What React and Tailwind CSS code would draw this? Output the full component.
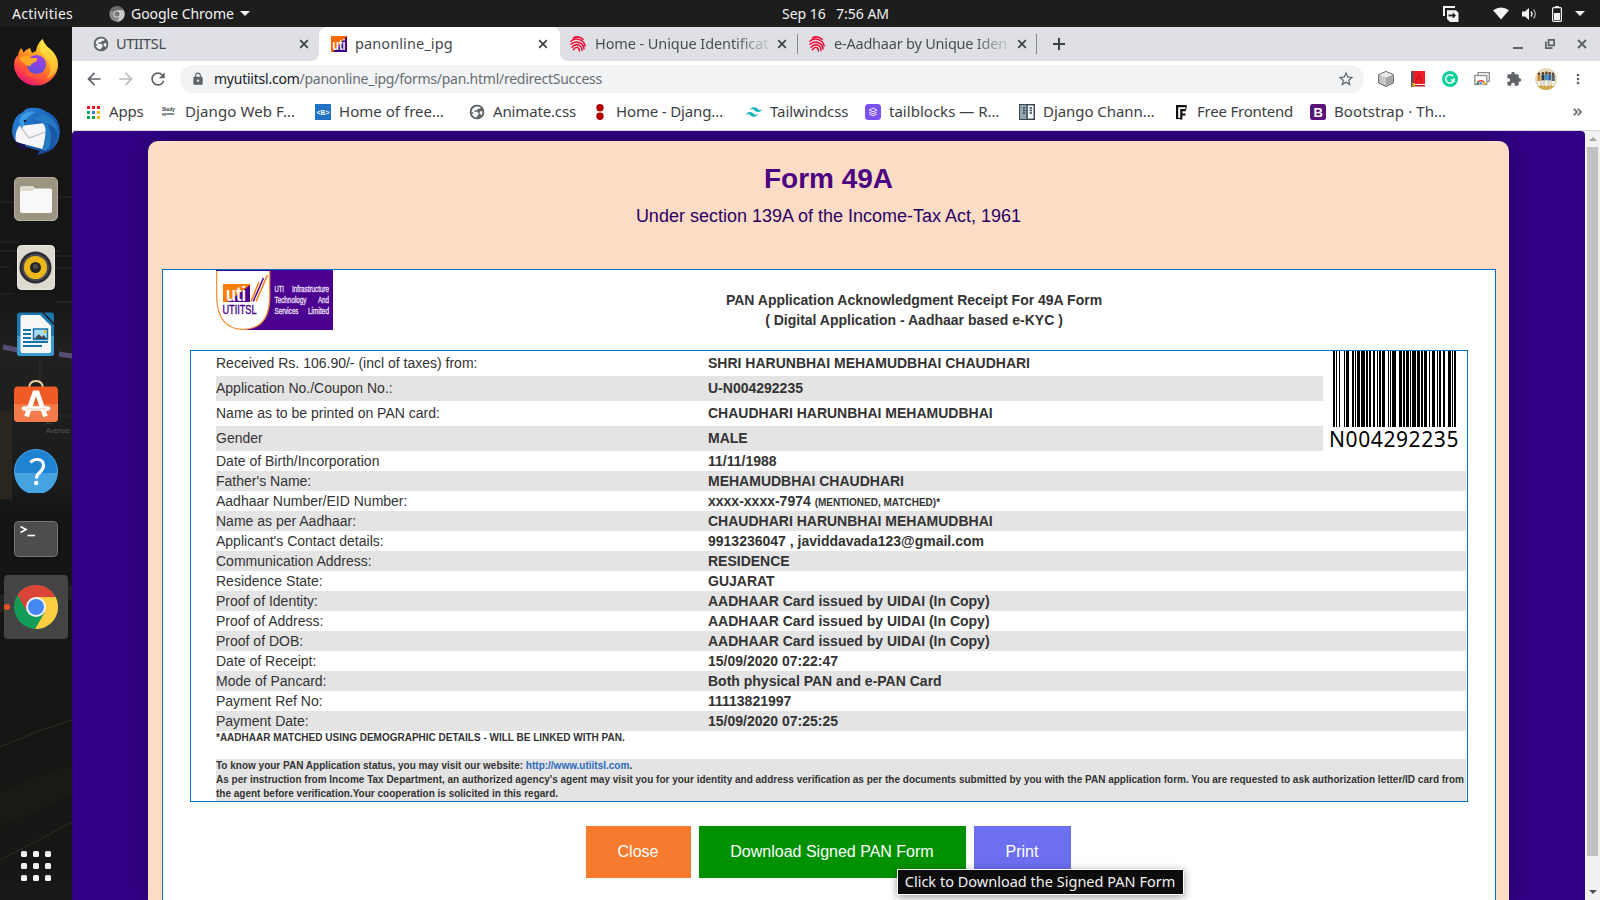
import React from "react";
import { MdLock, MdArrowBack, MdArrowForward, MdRefresh, MdStarBorder, MdExtension, MdMoreVert } from "react-icons/md";

/* ---------- small icons ---------- */

const Cross = ({ className = "" }) => (
  <svg viewBox="0 0 10 10" className={"h-[10px] w-[10px] shrink-0 " + className}>
    <path d="M1.200 1.200l7.600 7.600M8.800 1.200l-7.600 7.600" stroke="#3c4043" strokeWidth="1.700" fill="none" />
  </svg>
);

const Globe = () => (
  <svg viewBox="0 0 16 16" className="h-4 w-4 shrink-0">
    <circle cx="8" cy="8" r="7.200" fill="#5f6368" />
    <path d="M7.200 2.200q3-.9 5 1.100l-1.200 1.500H9.200L8 6.200H6l-1 1.600h3.200l1.400 1.400v1.600l-1.600 1.400-.6 1.800Q2.800 13 2.200 8.600l2 1.600v-1.600L2.200 7.200Q2.800 3.800 7.200 2.200zM11 7.200h2.800q.2 2.600-1.600 4.500l-.6-1.500-1.200-1.200z" fill="#f4f5f6" />
    <circle cx="8" cy="8" r="6.500" fill="none" stroke="#5f6368" strokeWidth="1.500" />
  </svg>
);

const GrayChrome = () => (
  <svg viewBox="0 0 48 48" className="h-[16px] w-[16px] shrink-0">
    <circle cx="24" cy="24" r="23" fill="#8a8a8a" />
    <path d="M24 24L4 12A23 23 0 0 1 44 13H24z" fill="#6b6b6b" />
    <path d="M24 13h20A23 23 0 0 1 24 47l10-17z" fill="#c9c9c9" />
    <circle cx="24" cy="24" r="10.5" fill="#eee" />
    <circle cx="24" cy="24" r="8" fill="#777" />
  </svg>
);

const UtiFavicon = () => (
  <svg viewBox="0 0 16 16" className="h-4 w-4 shrink-0">
    <rect width="16" height="16" fill="#ff6a00" />
    <path d="M16 0v16H2z" fill="#330086" />
    <text x="8" y="14" fontSize="14" fontWeight="700" fill="#fff" textAnchor="middle" textLength="13" lengthAdjust="spacingAndGlyphs" fontFamily="Liberation Sans, sans-serif">uti</text>
  </svg>
);

const Aadhaar = () => (
  <svg viewBox="0 0 16 16" className="h-4 w-4 shrink-0" fill="none" stroke="#ee0a35" strokeWidth="1.5" strokeLinecap="round">
    <path d="M3.400 2Q8.500-.8 13 3.400" />
    <path d="M.9 5.200Q4.500 1.800 9.500 3.600T15.200 10" />
    <path d="M1 8.300Q5 4.600 9.600 6.800T14 13" />
    <path d="M2 11.200Q5.500 7.400 8.900 9.200T11.900 14.400" />
    <path d="M3.400 13.700Q6 10.400 7.900 11.700T9.400 15" />
  </svg>
);

const AppsIcon = () => (
  <svg viewBox="0 0 13 13" className="ml-[1px] h-[13px] w-[13px] shrink-0">
    <path d="M0 0h3v3H0zM5 0h3v3H5zM10 0h3v3h-3z" fill="#f2132d" />
    <path d="M0 5h3v3H0zM0 10h3v3H0z" fill="#0aa552" />
    <path d="M5 5h3v3H5z" fill="#3b78f5" />
    <path d="M5 10h3v3H5z" fill="#0aa552" />
    <path d="M10 5h3v3h-3zM10 10h3v3h-3z" fill="#fbb50a" />
  </svg>
);

const StudyIcon = () => (
  <svg viewBox="0 0 16 16" className="h-4 w-4 shrink-0 overflow-visible">
    <text x="1" y="7.300" fontSize="4.600" fontWeight="700" fill="#22352d" fontFamily="Liberation Sans, sans-serif">Study</text>
    <text x="1" y="11.300" fontSize="4.300" fontWeight="700" fill="#22352d" fontFamily="Liberation Sans, sans-serif">gyaan</text>
  </svg>
);

const BracketB = () => (
  <svg viewBox="0 0 16 16" className="h-4 w-4 shrink-0">
    <rect width="16" height="16" fill="#2272c3" />
    <text x="8" y="10.6" fontSize="7" fontWeight="700" fill="#fff" textAnchor="middle" textLength="12.5" lengthAdjust="spacingAndGlyphs" fontFamily="Liberation Sans, sans-serif">&lt;B&gt;</text>
  </svg>
);

const RedDots = () => (
  <svg viewBox="0 0 16 16" className="h-4 w-4 shrink-0" fill="#b50000">
    <circle cx="8" cy="3.8" r="3.7" />
    <circle cx="8" cy="12.2" r="3.7" />
  </svg>
);

const TailwindIcon = () => (
  <svg viewBox="0 0 24 24" className="h-4 w-4 shrink-0" fill="#12b5b8">
    <path d="M12 4.8c-3.2 0-5.2 1.6-6 4.8 1.2-1.6 2.6-2.2 4.2-1.8.9.2 1.6.9 2.3 1.7C13.700 10.600 15 12 18 12c3.200 0 5.200-1.600 6-4.800-1.200 1.600-2.600 2.200-4.200 1.800-.9-.2-1.600-.9-2.300-1.700C16.300 6.200 15 4.800 12 4.800zM6 12c-3.200 0-5.200 1.600-6 4.800 1.200-1.600 2.600-2.200 4.200-1.800.9.200 1.600.9 2.300 1.700 1.200 1.100 2.500 2.500 5.500 2.500 3.200 0 5.200-1.600 6-4.800-1.200 1.600-2.600 2.200-4.200 1.800-.9-.2-1.600-.9-2.300-1.700C10.300 13.400 9 12 6 12z" />
  </svg>
);

const TailblocksIcon = () => (
  <svg viewBox="0 0 16 16" className="h-4 w-4 shrink-0">
    <rect width="16" height="16" rx="3.5" fill="#7c4ff0" />
    <g fill="none" stroke="#fff" strokeWidth="0.9" strokeLinejoin="round">
      <path d="M8 4l3.800 1.900L8 7.800 4.200 5.900z" />
      <path d="M4.200 8L8 9.900 11.800 8M4.200 10L8 11.900 11.800 10" />
    </g>
  </svg>
);

const DocsIcon = () => (
  <svg viewBox="0 0 16 16" className="h-4 w-4 shrink-0">
    <rect x=".7" y=".7" width="14.600" height="14.600" fill="#f4f6f8" stroke="#37474f" strokeWidth="1.400" />
    <rect x="1.400" y="1.400" width="6.300" height="13.200" fill="#90a4b4" />
    <path d="M8 1v14" stroke="#37474f" strokeWidth="1.600" />
    <path d="M4 4h2M4 6.500h2M4 9h2M10.500 4h2.500M10.500 6.500h2.500M10.500 9h2.500" stroke="#37474f" strokeWidth="1.500" />
  </svg>
);

const FreeFrontendIcon = () => (
  <svg viewBox="0 0 16 16" className="h-4 w-4 shrink-0" fill="none" stroke="#111" strokeWidth="2.200">
    <path d="M13.500 2.200H4.100v12.700" />
    <path d="M12.800 6.200H8.300v9.300M8 10.500h4.500" />
    <path d="M13 1.500v4" strokeWidth="1" />
    <path d="M3 14.500h6" strokeWidth="1.200" />
  </svg>
);

const BootstrapIcon = () => (
  <svg viewBox="0 0 16 16" className="h-4 w-4 shrink-0">
    <rect width="16" height="16" rx="2.500" fill="#59147a" />
    <text x="8.100" y="12.700" fontSize="13" fontWeight="700" fill="#fff" textAnchor="middle" fontFamily="Liberation Sans, sans-serif">B</text>
  </svg>
);

/* ---------- top bar ---------- */

const Caret = ({ className = "" }) => (
  <svg viewBox="0 0 10 5" className={"h-[5px] w-[10px] shrink-0 " + className}><path d="M0 0h10L5 5z" fill="#f2f2f2" /></svg>
);

function TopBar() {
  return (
    <header className="grid h-[27px] shrink-0 grid-cols-[782px_1fr_157px] items-center bg-[#1d1d1d] text-[14px] leading-[27px] text-[#f2f2f2]">
      <div className="flex items-center pl-3">
        <span className="w-[97px] tracking-[0.27px]">Activities</span>
        <GrayChrome />
        <span className="ml-[6px] w-[109px] tracking-[-0.03px]">Google Chrome</span>
        <Caret />
      </div>
      <div className="flex">
        <span className="w-[54px]">Sep 16</span>
        <span>7:56 AM</span>
      </div>
      <div className="flex items-center">
        <svg viewBox="0 0 16 16" className="h-4 w-4 shrink-0">
          <path d="M1 10V1h11" fill="none" stroke="#f2f2f2" strokeWidth="2" />
          <path d="M4 4.200h9l2.500 2.500V16H7l-3-3z" fill="#f2f2f2" />
          <path d="M5.500 9.500h5" stroke="#1d1d1d" strokeWidth="1.800" />
          <path d="M9.700 6.500l3.300 3-3.300 3z" fill="#1d1d1d" />
        </svg>
        <svg viewBox="0 0 16 13" className="ml-[34px] h-[13px] w-[16px] shrink-0"><path d="M0 3.200Q8-2 16 3.200L8 12.500z" fill="#f2f2f2" /></svg>
        <svg viewBox="0 0 16 14" className="ml-[13px] h-[14px] w-[16px] shrink-0">
          <path d="M0 4.500h3L7 1v12L3 9.500H0z" fill="#f2f2f2" />
          <path d="M9 4.500q2 2.500 0 5" fill="none" stroke="#f2f2f2" strokeWidth="1.300" />
          <path d="M11.500 2.500q3.500 4.500 0 9" fill="none" stroke="#b5b5b5" strokeWidth="1.200" />
        </svg>
        <svg viewBox="0 0 10 16" className="ml-[14px] h-4 w-[10px] shrink-0">
          <path d="M3 0h4v2H3z" fill="#f2f2f2" />
          <rect x=".6" y="1.600" width="8.800" height="13.800" rx="1" fill="none" stroke="#f2f2f2" strokeWidth="1.200" />
          <rect x="2" y="7" width="6" height="7" fill="#f2f2f2" />
        </svg>
        <Caret className="ml-[13px]" />
      </div>
    </header>
  );
}

/* ---------- dock ---------- */

const FirefoxIcon = () => (
  <svg viewBox="0 0 46 48" className="-mt-[2px] h-[48px] w-[46px]">
    <defs>
      <linearGradient id="ff1" x1=".8" y1=".1" x2=".3" y2="1">
        <stop offset="0" stopColor="#ffe23a" /><stop offset=".4" stopColor="#ff9a1f" /><stop offset=".75" stopColor="#ff4a3d" /><stop offset="1" stopColor="#e5127a" />
      </linearGradient>
      <linearGradient id="ff3" x1="0" y1="0" x2="0" y2="1"><stop offset="0" stopColor="#fff04a" /><stop offset="1" stopColor="#ffb42a" /></linearGradient>
      <radialGradient id="ff2" cx=".6" cy=".25" r=".8"><stop offset="0" stopColor="#a33ce8" /><stop offset="1" stopColor="#5a4fd8" /></radialGradient>
    </defs>
    <path d="M8 10q2 2 2.500 4.500Q13 11 17 10l2 5 4-2Q24 6 29.500 1q2 6 7 9.500 8.500 7 8.500 16a22 21 0 0 1-44 0q0-5 3-9 .5 1 .5 2Q5 14 8 10z" fill="url(#ff1)" />
    <path d="M29.500 1q2 6 7 9.500 9 7.500 8.300 18Q42 38 34 40q6-8 1-17-6-6-8-10-1-6 2.500-12z" fill="url(#ff3)" opacity=".85" />
    <circle cx="23.500" cy="26.500" r="9.500" fill="url(#ff2)" />
    <path d="M6 20q7-4 12 0h6q1 3-3 4.500-3 1-4 4-6-1-11-8.500z" fill="#ffa824" />
    <path d="M14 29q3 9 12 8-8 4-13-1z" fill="#ff5a35" />
  </svg>
);

const ThunderbirdIcon = () => (
  <svg viewBox="0 0 48 48" className="h-12 w-12">
    <defs><linearGradient id="tb" x1="0" y1="0" x2="1" y2="1"><stop offset="0" stopColor="#2c86dd" /><stop offset=".5" stopColor="#1b63b8" /><stop offset="1" stopColor="#1a3f94" /></linearGradient></defs>
    <path d="M18 1q10-1 15 3 14 5 15 20-1 17-13 21l-10 3 3-4-19-6Q0 34 0 24 1 9 11 5q3-4 7-4z" fill="url(#tb)" />
    <path d="M7 19l26-3q4 13 1 27L4 35q-2-8 3-16z" fill="#f6f6f8" />
    <path d="M8 19l9 12 17-6" fill="none" stroke="#b6bac4" strokeWidth="1.200" />
    <path d="M10 8q6-5 14-3-10 4-12 12l-2 5-2-4q-1-6 2-10z" fill="#3d9be6" />
    <path d="M24 13q12 2 9 17-1 8-3 13 17-1 17-17Q44 11 32 7q-6 0-8 6z" fill="#2479c2" />
    <path d="M34 16q8 10 3 26 8-4 9-14-2-9-12-12z" fill="#1c58a8" />
    <path d="M2 33q4 3 11 4.500 0 3 1 5.500Q6 42 2 33z" fill="#1b1350" />
    <circle cx="13" cy="14" r="1.300" fill="#10203c" />
  </svg>
);

const FilesIcon = () => (
  <svg viewBox="0 0 44 44" className="h-11 w-11">
    <rect x=".5" y=".5" width="43" height="43" rx="4.500" fill="#9c9482" stroke="#b8b19f" />
    <path d="M6 30V11q0-2 2-2h11l3 3.500h14q2 0 2 2V34" fill="#e0dbd0" />
    <path d="M6 16q0-2 2-2h10l3-2.500h15q2 0 2 2V34q0 2-2 2H8q-2 0-2-2z" fill="#faf9f7" />
  </svg>
);

const SpeakerIcon = () => (
  <svg viewBox="0 0 38 45" className="h-[45px] w-[38px]">
    <rect x=".5" y=".5" width="37" height="44" rx="4" fill="#dedad0" stroke="#ece9e1" />
    <circle cx="18.500" cy="22.500" r="16" fill="#2c2c34" />
    <circle cx="18.500" cy="22.500" r="13.500" fill="#4c4c52" />
    <circle cx="18.500" cy="22.500" r="11.500" fill="#edb91a" />
    <circle cx="18.500" cy="22.500" r="5.500" fill="#262629" />
    <circle cx="18.500" cy="21.500" r="2.500" fill="#4b4b4b" />
  </svg>
);

const WriterIcon = () => (
  <svg viewBox="0 0 38 45" className="-mt-[1px] h-[45px] w-[38px]">
    <path d="M3 .5h22L37 13v28q0 3-3 3H3q-3 0-3-3V3.500Q0 .5 3 .5z" fill="#1a76ac" />
    <path d="M27 .5h7q3 0 3 3V11z" fill="#1a76ac" />
    <path d="M0 24h37v17q0 3-3 3H3q-3 0-3-3z" fill="#3d9ccc" />
    <path d="M5.500 3H23l11 11v25q0 2-2 2H5.500q-2 0-2-2V5q0-2 2-2z" fill="#f7f7f7" />
    <path d="M6 18h8M6 22h8M6 26h8M6 30h25M6 34h19" stroke="#1572aa" strokeWidth="2" />
    <rect x="16.500" y="17" width="14" height="10.500" fill="#a8dcf7" stroke="#1572aa" strokeWidth="1.500" />
    <path d="M17.200 27l4.500-5 3 3 2-2 3.300 4z" fill="#3d4a52" />
    <circle cx="28" cy="19.500" r="1.600" fill="#f0b429" />
  </svg>
);

const SoftwareIcon = () => (
  <svg viewBox="0 0 44 44" className="-mt-[4px] h-11 w-11">
    <path d="M15 10q0-8 7-8t7 8" fill="none" stroke="#e9cf9c" strokeWidth="2" />
    <path d="M4 7.500h36q4 0 4 4V39q0 4-4 4H4q-4 0-4-4V11.500q0-4 4-4z" fill="#f05a24" />
    <path d="M0 25h44v14q0 4-4 4H4q-4 0-4-4z" fill="#f37a49" />
    <path d="M12.500 37.500L20.700 14h2.600l8.200 23.500" fill="none" stroke="#fff" strokeWidth="4.800" />
    <path d="M10 29.500h24" stroke="#fff" strokeWidth="4.500" strokeLinecap="round" />
    <path d="M12 30h20" stroke="#f2b79c" strokeWidth=".8" />
  </svg>
);

const HelpIcon = () => (
  <svg viewBox="0 0 44 44" className="h-11 w-11">
    <circle cx="22" cy="22" r="21.500" fill="#1f83d3" stroke="#4da6e6" />
    <path d="M.5 24h43A21.500 21.500 0 0 1 .5 24z" fill="#45a3e2" />
    <path d="M16.500 13.500q2.500-3 6.500-3 6.500 0 6.500 6 0 3.500-3.500 6.500-3.500 2.800-3.500 6.500" fill="none" stroke="#fff" strokeWidth="3.200" />
    <circle cx="22.200" cy="34" r="2.200" fill="#fff" />
  </svg>
);

const TerminalIcon = () => (
  <svg viewBox="0 0 44 36" className="h-[36px] w-11">
    <rect x=".5" y=".5" width="43" height="35" rx="4" fill="#4d4d4d" stroke="#767676" />
    <path d="M6.500 5.500l5.500 3-5.500 3" fill="none" stroke="#fff" strokeWidth="1.600" />
    <path d="M13.500 14.500h7.500" stroke="#fff" strokeWidth="1.600" />
  </svg>
);

const ChromeIcon = () => (
  <svg viewBox="0 0 44 44" className="h-11 w-11">
    <circle cx="22" cy="22" r="22" fill="#139c57" />
    <path d="M22 22L3.500 10A22 22 0 0 1 41.600 12H22z" fill="#dc4437" />
    <path d="M22 12h19.600A22 22 0 0 1 21 44l9.700-17z" fill="#ffcd40" />
    <path d="M3.500 10L13.300 27 22 22z" fill="#dc4437" />
    <path d="M21 44L30.700 27 13.300 27z" fill="#139c57" />
    <circle cx="22" cy="22" r="10" fill="#f3f3f3" />
    <circle cx="22" cy="22" r="8" fill="#4587f4" />
  </svg>
);

const DockBackdrop = () => (
  <svg viewBox="0 0 72 873" className="absolute inset-0 h-[873px] w-[72px]" fill="none">
    <defs>
      <linearGradient id="dk" x1="0" y1="0" x2="0" y2="1">
        <stop offset="0" stopColor="#161616" /><stop offset=".3" stopColor="#151515" /><stop offset=".37" stopColor="#202020" /><stop offset=".52" stopColor="#1b1c1d" /><stop offset=".56" stopColor="#141414" /><stop offset="1" stopColor="#171715" />
      </linearGradient>
    </defs>
    <rect width="72" height="873" fill="url(#dk)" />
    <path d="M0 175h14M0 215h18M0 224h60M20 229h52M0 240h10M50 170h22M55 241h17M0 267h14M55 275h17" stroke="#3a342a" opacity=".75" />
    <path d="M3 320l15 3M59 327l13 2" stroke="#6f5f96" strokeWidth="5" opacity=".7" />
    <path d="M40 332v60M40 389h30" stroke="#2e2e2f" />
    <rect y="384" width="10" height="88" fill="#2b261d" />
    <path d="M11 384v90" stroke="#3a3327" />
    <text x="46" y="397" fontSize="10" fill="#45484a" fontFamily="Liberation Sans, sans-serif">2</text>
    <text x="46" y="406" fontSize="7" fill="#55585a" fontFamily="Liberation Sans, sans-serif">Avenue</text>
    <path d="M0 568l72-10v14L0 586z" fill="#23211d" />
    <path d="M0 720q30-14 72-27M0 798q36-16 72-32M0 833q36-18 72-38" stroke="#2a2925" strokeWidth="1.200" />
    <path d="M0 765q36-16 72-27v30L0 800z" fill="#191916" />
  </svg>
);

function Dock() {
  const apps = [FirefoxIcon, ThunderbirdIcon, FilesIcon, SpeakerIcon, WriterIcon, SoftwareIcon, HelpIcon, TerminalIcon];
  return (
    <nav className="relative flex w-[72px] shrink-0 flex-col bg-[#151614]">
      <DockBackdrop />
      <div className="relative flex flex-col pt-[2px]">
        {apps.map((Icon, i) => (
          <div key={i} className="flex h-[68px] items-center justify-center">
            <Icon />
          </div>
        ))}
        <div className="flex h-[68px] items-center justify-center">
          <div className="flex h-16 w-16 items-center rounded bg-[#444444]">
            <span className="h-[6px] w-[6px] rounded-full bg-[#e95420]" />
            <span className="ml-[4px]"><ChromeIcon /></span>
          </div>
        </div>
      </div>
      <div className="relative mt-auto grid grid-cols-[6px_6px_6px] gap-[6px] pb-[19px] pl-[21px]">
        {Array.from({ length: 9 }, (_, i) => <span key={i} className="h-[6px] w-[6px] rounded-[1.5px] bg-[#f2f2f2]" />)}
      </div>
    </nav>
  );
}

/* ---------- browser chrome ---------- */

function TabStrip() {
  return (
    <div className="flex h-[34px] shrink-0 bg-white text-[14.5px] leading-[32px] text-[#45494d]">
      <div className="flex w-[247px] items-center rounded-br-[8px] bg-[#dee0e5] pr-[10px] pl-[21px]">
        <Globe />
        <span className="ml-[7px] pb-[2px] tracking-[-0.35px]">UTIITSL</span>
        <Cross className="ml-auto" />
      </div>
      <div className="flex w-[241px] bg-[#dee0e5]">
        <div className="flex grow items-center rounded-t-[8px] bg-white pr-[12px] pl-[12px]">
          <UtiFavicon />
          <span className="ml-[8px] pb-[2px] tracking-[0.1px]">panonline_ipg</span>
          <Cross className="ml-auto" />
        </div>
      </div>
      <div className="flex grow items-center rounded-bl-[8px] bg-[#dee0e5]">
        <div className="flex w-[238px] items-center pl-[10px]">
          <Aadhaar />
          <span className="ml-[9px] w-[175px] overflow-hidden bg-linear-to-r from-[#45494d] from-80% to-[#45494d]/10 bg-clip-text pb-[2px] tracking-[-0.09px] whitespace-nowrap text-transparent">Home - Unique Identificat</span>
          <Cross className="ml-[7px]" />
          <span className="ml-auto h-[20px] w-px bg-[#85888d]" />
        </div>
        <div className="flex w-[239px] items-center pl-[11px]">
          <Aadhaar />
          <span className="ml-[9px] w-[175px] overflow-hidden bg-linear-to-r from-[#45494d] from-80% to-[#45494d]/10 bg-clip-text pb-[2px] tracking-[-0.21px] whitespace-nowrap text-transparent">e-Aadhaar by Unique Iden</span>
          <Cross className="ml-[8px]" />
          <span className="ml-auto h-[20px] w-px bg-[#85888d]" />
        </div>
        <svg viewBox="0 0 12 12" className="ml-[16px] h-3 w-3"><path d="M6 0v12M0 6h12" stroke="#3c4043" strokeWidth="2" /></svg>
        <div className="ml-auto flex items-center gap-[22px] pr-[13px] text-[#5f6368]">
          <span className="mt-[8px] h-[2px] w-[10px] bg-[#5f6368]" />
          <svg viewBox="0 0 10 10" className="h-[10px] w-[10px]" fill="none" stroke="currentColor" strokeWidth="1.800"><rect x="3.600" y=".9" width="5.500" height="5.500" /><path d="M.9 2.500v6.600h6.600" /></svg>
          <svg viewBox="0 0 10 10" className="h-[10px] w-[10px]"><path d="M1 1l8 8M9 1l-8 8" stroke="currentColor" strokeWidth="2" /></svg>
        </div>
      </div>
    </div>
  );
}

function Toolbar() {
  return (
    <div className="flex h-[36px] shrink-0 items-center bg-white pl-[12px] text-[#5f6368]">
      <MdArrowBack className="h-[20px] w-[20px]" />
      <MdArrowForward className="ml-[12px] h-[20px] w-[20px] text-[#babcbe]" />
      <MdRefresh className="ml-[12px] h-[20px] w-[20px]" />
      <div className="ml-[12px] flex h-[28px] w-[1184px] items-center rounded-full bg-[#f1f3f4] pr-[9px] pl-[11px] text-[14px]">
        <MdLock className="h-[14px] w-[14px]" />
        <span className="ml-[9px] pb-[2px] tracking-[-0.236px] text-[#202124]">myutiitsl.com</span>
        <span className="pb-[2px] tracking-[-0.253px] text-[#6a6e72]">/panonline_ipg/forms/pan.html/redirectSuccess</span>
        <MdStarBorder className="ml-auto h-[18px] w-[18px]" />
      </div>
      <div className="ml-[14px] flex items-center gap-4">
        <svg viewBox="0 0 16 16" className="h-4 w-4"><path d="M8 .5l7.300 3v8.500L8 15.500.7 12V3.500z" fill="#c9c9c9" stroke="#5c5c5c" /><path d="M8 6.500v8.500l6.800-3.300V4z" fill="#a5a5a5" /><path d="M8 1L1.500 3.700 8 6.500l6.500-2.800z" fill="#ececec" /></svg>
        <svg viewBox="0 0 16 16" className="h-4 w-4"><path d="M1 0h3v16H1z" fill="#555" /><path d="M3.500 0H15v13H3.500z" fill="#ee1c25" /><path d="M3.500 13H15v1H3.500z" fill="#fff" /><path d="M3.500 14H15v1.500H3.500z" fill="#c4141b" /><path d="M2.500 12h2.500v4l-1.300-1-1.200 1z" fill="#f5b80a" /><path d="M6 10.500L9 3l3 7.500M7 8h4" fill="none" stroke="#c8141c" strokeWidth="1.100" /></svg>
        <svg viewBox="0 0 16 16" className="h-4 w-4"><circle cx="8" cy="8" r="8" fill="#0bcf9a" /><path d="M11.200 5.200A4.200 4.200 0 1 0 12 9H8.800" fill="none" stroke="#fff" strokeWidth="1.500" /><path d="M12.200 7v4" stroke="#fff" strokeWidth="1" /></svg>
        <svg viewBox="0 0 16 16" className="h-4 w-4"><path d="M4 4V1.700h11.300v8.600H13" fill="none" stroke="#8f8f8f" strokeWidth="1.300" /><rect x=".8" y="4.500" width="12" height="9" fill="#fff" stroke="#8f8f8f" strokeWidth="1.300" /><path d="M2.500 13.500a4.500 4.500 0 0 1 9 0z" fill="#e33b2e" /><path d="M2.500 13.500a4.500 4.500 0 0 1 1.500-3.300L6 13.500z" fill="#1ba260" /><path d="M11.500 13.500a4.500 4.500 0 0 0-.8-2.500H8v2.500z" fill="#fbc116" /><circle cx="7" cy="12.300" r="1.700" fill="#4285f4" stroke="#fff" strokeWidth=".7" /></svg>
        <MdExtension className="h-4 w-4" />
        <svg viewBox="0 0 22 22" className="-mx-[3px] h-[22px] w-[22px]">
          <defs><clipPath id="av"><circle cx="11" cy="11" r="11" /></clipPath></defs>
          <g clipPath="url(#av)">
            <rect width="22" height="22" fill="#e6dcbc" />
            <rect y="17" width="22" height="5" fill="#d2a94e" />
            <path d="M2.500 7h3v6h-3z" fill="#c98a2f" /><path d="M6.500 6.500h3v6h-3z" fill="#2f3946" /><path d="M10 6h2.800v6.500H10z" fill="#3d8fd0" /><path d="M13.200 6.500H16v6h-2.800z" fill="#2c66a3" /><path d="M16.700 7h3v6h-3z" fill="#55606e" />
            <path d="M3 13h2.200v5H3zM10 12.500h2.500V18H10zM17 13h2.200v5H17z" fill="#f4f1ea" /><path d="M6.800 12.500H9v5.500H6.800zM13.500 12.500h2.200V18h-2.200z" fill="#dcdde0" />
            <g fill="#5b3a28"><circle cx="4" cy="5.800" r="1.300" /><circle cx="8" cy="5.300" r="1.300" /><circle cx="11.400" cy="4.900" r="1.300" /><circle cx="14.600" cy="5.300" r="1.300" /><circle cx="18" cy="5.800" r="1.300" /></g>
          </g>
        </svg>
        <MdMoreVert className="h-[18px] w-4" />
      </div>
    </div>
  );
}

function Bookmarks() {
  const items = [
    ["w-[75px]", AppsIcon, "Apps", "ml-[1px] tracking-[-0.18px]"],
    ["w-[154px]", StudyIcon, "Django Web F…", "tracking-[0.1px]"],
    ["w-[154px]", BracketB, "Home of free…", "tracking-[0.03px]"],
    ["w-[123px]", Globe, "Animate.css", "tracking-[-0.15px]"],
    ["w-[154px]", RedDots, "Home - Djang…", "tracking-[-0.15px]"],
    ["w-[119px]", TailwindIcon, "Tailwindcss", "tracking-[-0.05px]"],
    ["w-[154px]", TailblocksIcon, "tailblocks — R…", "tracking-[0.02px]"],
    ["w-[154px]", DocsIcon, "Django Chann…", "tracking-[-0.06px]"],
    ["w-[137px]", FreeFrontendIcon, "Free Frontend", "tracking-[-0.22px]"],
    ["w-[154px]", BootstrapIcon, "Bootstrap · Th…", "tracking-[0.08px]"],
  ];
  return (
    <div className="flex h-[34px] shrink-0 items-center border-b border-[#d5d7da] bg-white pr-[18px] pb-[3px] pl-[14px] text-[15px] leading-[28px] text-[#3c4043]">
      {items.map(([w, Icon, label, cls]) => (
        <div key={label} className={"flex shrink-0 items-center gap-2 whitespace-nowrap " + w}>
          <Icon />
          <span className={"pb-[2px] " + cls}>{label}</span>
        </div>
      ))}
      <svg viewBox="0 0 9 8" className="ml-auto h-[8px] w-[9px]" fill="none" stroke="#5f6368" strokeWidth="1.600"><path d="M.8.800L4 4 .8 7.200M4.800.800L8 4 4.800 7.200" /></svg>
    </div>
  );
}

/* ---------- page ---------- */

const UtiLogo = () => (
  <svg viewBox="0 0 117 60" className="h-[60px] w-[117px]">
    <rect width="117" height="60" fill="#4b0090" />
    <path d="M0 1h27v59H0z" fill="#fff" />
    <path d="M.7 1v27Q2 59 27 59.400 53 59 53.700 28V1" fill="#fff" stroke="#f5943a" strokeWidth="1.300" />
    <rect x="7" y="14" width="27" height="18" fill="#fb7d0a" />
    <path d="M34 15v17H12z" fill="#4b0090" />
    <text x="20" y="30.500" fontSize="20" fontWeight="700" fill="#fff" textAnchor="middle" textLength="20" lengthAdjust="spacingAndGlyphs" fontFamily="Liberation Sans, sans-serif">uti</text>
    <path d="M35 31.500L43 12M40 31.500L51.500 5" stroke="#fb7d0a" strokeWidth="1.500" />
    <path d="M37.200 31.500L47.500 8" stroke="#4b0090" strokeWidth="1.500" />
    <text x="6.500" y="43.800" fontSize="12" fill="#4b0090" stroke="#4b0090" strokeWidth=".4" textLength="34" lengthAdjust="spacingAndGlyphs" fontFamily="Liberation Sans, sans-serif">UTIITSL</text>
    <g fontSize="9.500" fill="#efe6f7" stroke="#efe6f7" strokeWidth=".3" fontFamily="Liberation Sans, sans-serif">
      <text x="58.500" y="21.500" textLength="9.500" lengthAdjust="spacingAndGlyphs">UTI</text>
      <text x="76" y="21.500" textLength="37" lengthAdjust="spacingAndGlyphs">Infrastructure</text>
      <text x="58.500" y="32.500" textLength="32" lengthAdjust="spacingAndGlyphs">Technology</text>
      <text x="102" y="32.500" textLength="11" lengthAdjust="spacingAndGlyphs">And</text>
      <text x="58.500" y="43.500" textLength="24" lengthAdjust="spacingAndGlyphs">Services</text>
      <text x="92" y="43.500" textLength="21" lengthAdjust="spacingAndGlyphs">Limited</text>
    </g>
  </svg>
);

/* Code 128 element widths, alternating bar and space */
const CODE = "211214" + "113321" + "113141" + "212222" + "112133" + "111143" + "312131" + "114131" + "213212" + "321122" + "2331112";

function Barcode() {
  let x = 0;
  const bars = [];
  [...CODE].forEach((c, i) => {
    if (i % 2 === 0) bars.push(<rect key={i} x={x} y="0" width={+c} height="76" fill="#000" />);
    x += +c;
  });
  return (
    <div className="w-[143px] pl-[10px]">
      <svg viewBox="0 0 123 76" className="block h-[76px] w-[123px]" shapeRendering="crispEdges">{bars}</svg>
      <div className="mt-[1px] -ml-[4px] text-[21px] leading-[23px] tracking-[0.6px] text-black [font-family:'Noto_Sans',sans-serif]">N004292235</div>
    </div>
  );
}

function Row({ label, children, tall, gray }) {
  return (
    <div className={"flex " + (tall ? "h-[25px] leading-[25px]" : "h-[20px] leading-[20px]") + (gray ? " bg-[#e4e4e4]" : "")}>
      <span className="w-[492px]">{label}</span>
      <span className="font-bold">{children}</span>
    </div>
  );
}

const ROWS = [
  ["Date of Birth/Incorporation", "11/11/1988"],
  ["Father's Name:", "MEHAMUDBHAI CHAUDHARI"],
  ["Aadhaar Number/EID Number:", <>xxxx-xxxx-7974 <span className="text-[10px]">(MENTIONED, MATCHED)*</span></>],
  ["Name as per Aadhaar:", "CHAUDHARI HARUNBHAI MEHAMUDBHAI"],
  ["Applicant's Contact details:", "9913236047 , javiddavada123@gmail.com"],
  ["Communication Address:", "RESIDENCE"],
  ["Residence State:", "GUJARAT"],
  ["Proof of Identity:", "AADHAAR Card issued by UIDAI (In Copy)"],
  ["Proof of Address:", "AADHAAR Card issued by UIDAI (In Copy)"],
  ["Proof of DOB:", "AADHAAR Card issued by UIDAI (In Copy)"],
  ["Date of Receipt:", "15/09/2020 07:22:47"],
  ["Mode of Pancard:", "Both physical PAN and e-PAN Card"],
  ["Payment Ref No:", "11113821997"],
  ["Payment Date:", "15/09/2020 07:25:25"],
];

function Page() {
  return (
    <main className="flex grow flex-col overflow-hidden rounded-t-[4px] bg-[#310086] pt-[10px] pr-[76px] pl-[76px] [font-family:'Liberation_Sans',Arial,sans-serif]">
      <div className="flex grow flex-col rounded-t-[10px] bg-[#fcdcc4] pr-[13px] pl-[14px] shadow-[0_0_25px_rgba(0,0,0,0.3)]">
        <h1 className="mt-[20px] pr-px text-center text-[28px] leading-[36px] font-bold text-[#4b0082]">Form 49A</h1>
        <p className="mt-[8px] pr-px text-center text-[18px] leading-[22px] text-[#2a0066]">Under section 139A of the Income-Tax Act, 1961</p>
        <section className="mt-[42px] flex grow flex-col border border-b-0 border-[#0072c6] bg-white px-[27px] text-[14px] text-[#333]">
          <div className="flex h-[80px] shrink-0">
            <div className="ml-[26px]"><UtiLogo /></div>
            <div className="ml-[25px] w-[1112px] shrink-0 pt-[20px] text-center leading-[20px] font-bold">
              <div>PAN Application Acknowledgment Receipt For 49A Form</div>
              <div>( Digital Application - Aadhaar based e-KYC )</div>
            </div>
          </div>
          <div className="flex h-[452px] w-[1278px] shrink-0 flex-col border border-[#0072c6] pr-[1px] pl-[25px]">
            <div className="flex">
              <div className="w-[1107px] shrink-0">
                <Row tall label="Received Rs. 106.90/- (incl of taxes) from:">SHRI HARUNBHAI MEHAMUDBHAI CHAUDHARI</Row>
                <Row tall gray label="Application No./Coupon No.:">U-N004292235</Row>
                <Row tall label="Name as to be printed on PAN card:">CHAUDHARI HARUNBHAI MEHAMUDBHAI</Row>
                <Row tall gray label="Gender">MALE</Row>
              </div>
              <Barcode />
            </div>
            {ROWS.map(([label, value], i) => <Row key={label} label={label} gray={i % 2 === 1}>{value}</Row>)}
            <div className="h-[28px] text-[10px] leading-[14px] font-bold">*AADHAAR MATCHED USING DEMOGRAPHIC DETAILS - WILL BE LINKED WITH PAN.</div>
            <div className="h-[42px] bg-[#e4e4e4] text-[10px] leading-[14px] font-bold">
              To know your PAN Application status, you may visit our website: <span className="text-[#2a6bbf]">http://www.utiitsl.com</span>.<br />
              As per instruction from Income Tax Department, an authorized agency's agent may visit you for your identity and address verification as per the documents submitted by you with the PAN application form. You are requested to ask authorization letter/ID card from the agent before verification.Your cooperation is solicited in this regard.
            </div>
          </div>
          <div className="mt-[24px] flex justify-center gap-2 pr-[2px] text-[16px] leading-[52px] text-white">
            <div className="h-[52px] w-[105px] bg-[#f77b2e] text-center">Close</div>
            <div className="relative h-[52px] w-[267px] bg-[#009100] text-center">
              Download Signed PAN Form
              <div className="absolute top-[43px] left-[198px] z-10 h-[26px] w-[287px] border border-white bg-[#0c0c0c] text-center text-[14.5px] leading-[23px] tracking-[0.01px] whitespace-nowrap text-[#f2f2f2] shadow-[0_2px_8px_rgba(0,0,0,0.4)] [font-family:'Noto_Sans',sans-serif]">Click to Download the Signed PAN Form</div>
            </div>
            <div className="h-[52px] w-[97px] bg-[#6c6ff0] text-center">Print</div>
          </div>
        </section>
      </div>
    </main>
  );
}

const Scrollbar = () => (
  <div className="flex w-[15px] shrink-0 flex-col items-center bg-[#f1f1f1]">
    <svg viewBox="0 0 8 4" className="my-[6px] h-[4px] w-[8px] shrink-0"><path d="M0 4h8L4 0z" fill="#a3a3a3" /></svg>
    <div className="h-[709px] w-[11px] bg-[#c1c1c1]" />
    <svg viewBox="0 0 8 4" className="mt-auto mb-[6px] h-[4px] w-[8px] shrink-0"><path d="M0 0h8L4 4z" fill="#505050" /></svg>
  </div>
);

export default function App() {
  return (
    <div className="flex h-[900px] w-[1600px] flex-col overflow-hidden [font-family:'Noto_Sans',sans-serif]">
      <TopBar />
      <div className="flex min-h-0 grow">
        <Dock />
        <div className="flex min-w-0 grow flex-col bg-white">
          <TabStrip />
          <Toolbar />
          <Bookmarks />
          <div className="flex min-h-0 grow">
            <Page />
            <Scrollbar />
          </div>
        </div>
      </div>
    </div>
  );
}
